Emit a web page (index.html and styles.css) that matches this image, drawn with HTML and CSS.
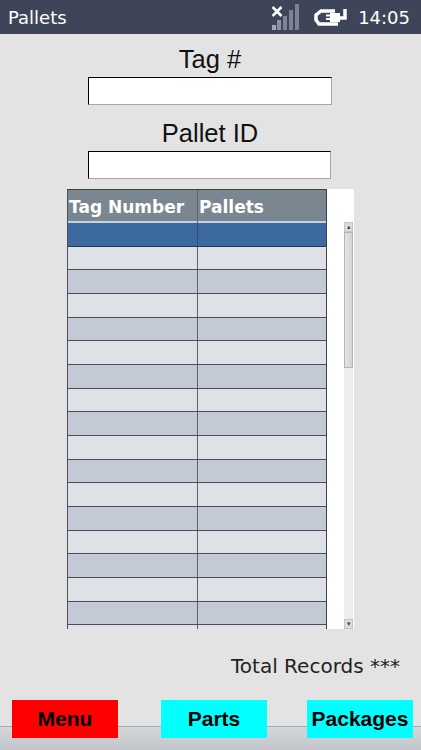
FILE: index.html
```html
<!DOCTYPE html>
<html lang="en">

<head>
    <meta charset="UTF-8">
    <meta name="viewport" content="width=device-width, initial-scale=1.0">
    <title>Pallets</title>
    <link rel="stylesheet" href="styles.css">
</head>

<body>
    <header class="status-bar">
        <span class="status-title">Pallets</span>
        <div class="status-icons">
            <svg class="icon-signal" viewBox="0 0 27 26" width="27" height="26">
                <path d="M0.500 3l9 9M9.500 3l-9 9" stroke="#fff" stroke-width="2.600" fill="none" />
                <rect x="0" y="21" width="4" height="5" fill="#a4a8b3" />
                <rect x="5" y="16" width="4" height="10" fill="#8d92a2" />
                <rect x="11" y="12" width="4" height="14" fill="#7d8395" />
                <rect x="17" y="6" width="4" height="20" fill="#7d8395" />
                <rect x="23" y="0" width="4" height="26" fill="#7d8395" />
            </svg>
            <svg class="icon-power" viewBox="0 0 33 17" width="33" height="17">
                <path d="M21 2H7L2 6v5l3 4h19" stroke="#fff" stroke-width="3.500" fill="none" />
                <path d="M16 4h10v9H16v-2h-4V9h4V7.500h-4v-2h4z" fill="#fff" />
                <path d="M25 9h6V0" stroke="#fff" stroke-width="3.500" fill="none" />
            </svg>
            <span class="status-time">14:05</span>
        </div>
    </header>

    <main class="content">
        <label class="field-label">Tag #</label>
        <input type="text" class="field-input">
        <label class="field-label">Pallet ID</label>
        <input type="text" class="field-input field-input-short">

        <div class="grid-panel">
            <div class="grid-table">
                <div class="grid-row grid-head">
                    <div class="grid-cell">Tag Number</div>
                    <div class="grid-cell">Pallets</div>
                </div>
                <div class="grid-row row-selected"><div class="grid-cell"></div><div class="grid-cell"></div></div>
                <div class="grid-row"><div class="grid-cell"></div><div class="grid-cell"></div></div>
                <div class="grid-row"><div class="grid-cell"></div><div class="grid-cell"></div></div>
                <div class="grid-row"><div class="grid-cell"></div><div class="grid-cell"></div></div>
                <div class="grid-row"><div class="grid-cell"></div><div class="grid-cell"></div></div>
                <div class="grid-row"><div class="grid-cell"></div><div class="grid-cell"></div></div>
                <div class="grid-row"><div class="grid-cell"></div><div class="grid-cell"></div></div>
                <div class="grid-row"><div class="grid-cell"></div><div class="grid-cell"></div></div>
                <div class="grid-row"><div class="grid-cell"></div><div class="grid-cell"></div></div>
                <div class="grid-row"><div class="grid-cell"></div><div class="grid-cell"></div></div>
                <div class="grid-row"><div class="grid-cell"></div><div class="grid-cell"></div></div>
                <div class="grid-row"><div class="grid-cell"></div><div class="grid-cell"></div></div>
                <div class="grid-row"><div class="grid-cell"></div><div class="grid-cell"></div></div>
                <div class="grid-row"><div class="grid-cell"></div><div class="grid-cell"></div></div>
                <div class="grid-row"><div class="grid-cell"></div><div class="grid-cell"></div></div>
                <div class="grid-row"><div class="grid-cell"></div><div class="grid-cell"></div></div>
                <div class="grid-row"><div class="grid-cell"></div><div class="grid-cell"></div></div>
                <div class="grid-row"><div class="grid-cell"></div><div class="grid-cell"></div></div>
            </div>
            <div class="scroll-gutter">
                <div class="scrollbar">
                    <div class="scroll-btn">▴</div>
                    <div class="scroll-track">
                        <div class="scroll-thumb"></div>
                    </div>
                    <div class="scroll-btn">▾</div>
                </div>
            </div>
        </div>

        <p class="total-records">Total Records ***</p>
    </main>

    <footer class="button-bar">
        <button class="nav-btn nav-red">Menu</button>
        <button class="nav-btn nav-cyan nav-parts">Parts</button>
        <button class="nav-btn nav-cyan nav-packages">Packages</button>
    </footer>
</body>

</html>
```

FILE: styles.css
```css
* {
    box-sizing: border-box;
}

html,
body {
    margin: 0;
    height: 750px;
    overflow: hidden;
}

body {
    background-color: #e3e3e3;
    background-image: radial-gradient(#e0e0e0 0.700px, transparent 0.700px);
    background-size: 4px 4px;
    color: #111;
    font-family: "Liberation Sans", Arial, sans-serif;
    display: flex;
    flex-direction: column;
}

.status-bar {
    height: 34px;
    background: #3f4558;
    color: #fff;
    font-family: "DejaVu Sans", Tahoma, sans-serif;
    display: flex;
    align-items: center;
    justify-content: space-between;
    padding: 0 11px 0 8px;
}

.status-title {
    font-size: 18px;
}

.status-icons {
    display: flex;
    align-items: center;
}

.icon-signal {
    margin-right: 15px;
}

.icon-power {
    margin-right: 11px;
}

.status-time {
    font-size: 18px;
}

.content {
    flex: 1;
    display: flex;
    flex-direction: column;
    align-items: flex-start;
    padding-top: 9px;
}

.field-label {
    margin-left: 88px;
    width: 244px;
    height: 34px;
    font-size: 25.500px;
    line-height: 32px;
    text-align: center;
}

.field-input {
    display: block;
    width: 244px;
    height: 28px;
    margin: 0 0 12px 88px;
    padding: 0;
    background: #fff;
    border: 1px solid #a8a8a8;
    border-top-color: #000;
    border-left-color: #000;
    border-radius: 0;
}

.field-input-short {
    width: 243px;
    margin-bottom: 10px;
}

.grid-panel {
    display: flex;
    width: 287px;
    height: 440px;
    margin-left: 67px;
    background: #fff;
    overflow: hidden;
}

.grid-table {
    width: 260px;
    flex: none;
    border-left: 1px solid #4a5058;
    border-right: 1px solid #3c4248;
    border-top: 1px solid #3c4248;
}

.grid-row {
    display: grid;
    grid-template-columns: 130px 1fr;
    height: 23.670px;
    background: #c3cad6;
    border-bottom: 1px solid #4a4e58;
}

.grid-row:nth-child(odd) {
    background: #dee1e6;
}

.grid-cell {
    border-right: 1px solid #5c6068;
}

.grid-cell:last-child {
    border-right: none;
}

.grid-row.grid-head {
    height: 33px;
    background: #7a8791;
    border-bottom: 2px solid #c5d3e0;
    color: #fff;
    font-family: "DejaVu Sans", Tahoma, sans-serif;
    font-size: 17px;
    font-weight: bold;
    line-height: 34px;
}

.grid-head .grid-cell {
    padding-left: 1px;
    border-right-color: #5e6870;
    white-space: nowrap;
}

.grid-row.row-selected {
    background: #3c699f;
    border-bottom-color: #223a58;
}

.row-selected .grid-cell {
    border-right-color: #2e5078;
}

.scroll-gutter {
    flex: 1;
    padding: 33px 1px 0 17px;
}

.scrollbar {
    height: 407px;
    background: #eeeeee;
    display: flex;
    flex-direction: column;
}

.scroll-btn {
    height: 10px;
    background: #dcdcdc;
    border: 1px solid #c4c4c4;
    color: #444;
    font-size: 7px;
    line-height: 8px;
    text-align: center;
    overflow: hidden;
}

.scroll-track {
    flex: 1;
}

.scroll-thumb {
    height: 136px;
    background: linear-gradient(to right, #e4e4e4, #d4d4d4);
    border: 1px solid #b4b4b4;
}

.total-records {
    margin: 25px 0 0;
    align-self: flex-end;
    padding-right: 21px;
    font-family: "DejaVu Sans", Tahoma, sans-serif;
    font-size: 20px;
    line-height: 24px;
    color: #222;
}

.button-bar {
    height: 50px;
    display: flex;
    padding: 0 8px 12px 12px;
    background: linear-gradient(to bottom, transparent 26px, #a9a9a9 26px, #a9a9a9 27px, #d4d7da 27px, #c2c5c9 50px);
}

.nav-btn {
    width: 106px;
    height: 38px;
    padding: 0;
    border: none;
    border-radius: 0;
    color: #000;
    font-family: "Liberation Sans", Arial, sans-serif;
    font-size: 21px;
    font-weight: bold;
}

.nav-red {
    background: #ff0000;
}

.nav-cyan {
    background: #00ffff;
}

.nav-parts {
    margin-left: 43px;
}

.nav-packages {
    margin-left: 40px;
}
```
